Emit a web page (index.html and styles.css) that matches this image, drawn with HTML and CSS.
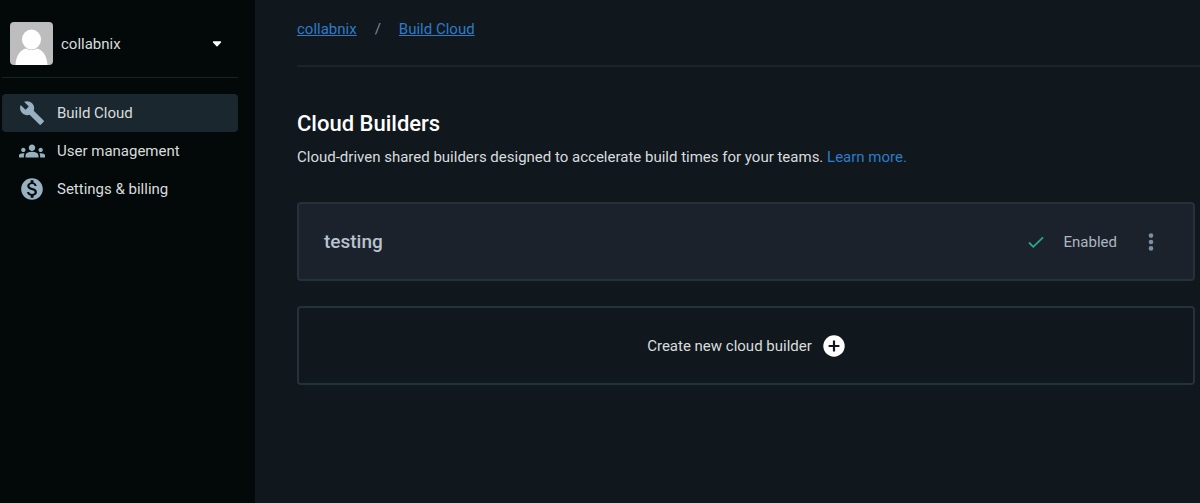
FILE: index.html
```html
<!DOCTYPE html>
<html lang="en">
<head>
<meta charset="utf-8">
<meta name="viewport" content="width=device-width, initial-scale=1">
<title>Cloud Builders</title>
<link rel="stylesheet" href="styles.css">
</head>
<body>
<div class="app">
  <aside class="sidebar">
    <button class="account" type="button" aria-haspopup="true">
      <svg class="avatar" viewBox="0 0 43 43" aria-hidden="true">
        <rect width="43" height="43" fill="#bdbdbd"/>
        <path d="M5.500 43C6 34 10 28 16 26.500C18 27.700 19.500 28 21.500 28S25 27.700 27 26.500C33 28 37 34 37.500 43Z" fill="#fff"/>
        <ellipse cx="21.500" cy="17.500" rx="9.500" ry="10" fill="#fff"/>
      </svg>
      <span class="account-name">collabnix</span>
      <svg class="caret" viewBox="0 0 10 6" aria-hidden="true"><path d="M1.500 1h7L5 4.800z" fill="#fff" stroke="#fff" stroke-width="1.400" stroke-linejoin="round"/></svg>
    </button>
    <nav class="nav" aria-label="Main">
      <a class="nav-item nav-item-active" href="#build" aria-current="page">
        <svg class="nav-icon" viewBox="0 0 24 24" aria-hidden="true"><path d="m22.700 19-9.100-9.100c.9-2.300.4-5-1.500-6.900-2-2-5-2.400-7.400-1.300L9 6 6 9 1.600 4.700C.4 7.100.9 10.100 2.900 12.100c1.900 1.900 4.600 2.400 6.900 1.500l9.100 9.100c.4.4 1 .4 1.400 0l2.300-2.300c.5-.4.5-1.100.1-1.400z"/></svg>
        <span>Build Cloud</span>
      </a>
      <a class="nav-item" href="#users">
        <svg class="nav-icon" viewBox="0 0 24 24" aria-hidden="true"><path d="M12 12.750c1.630 0 3.070.39 4.240.9 1.080.48 1.760 1.560 1.760 2.730V18H6v-1.610c0-1.180.68-2.260 1.760-2.730 1.170-.52 2.610-.91 4.240-.91zM4 13c1.100 0 2-.9 2-2s-.9-2-2-2-2 .9-2 2 .9 2 2 2zm1.130 1.100C4.760 14.040 4.390 14 4 14c-.99 0-1.930.21-2.780.58C.48 14.900 0 15.620 0 16.430V18h4.500v-1.610c0-.83.23-1.610.63-2.290zM20 13c1.100 0 2-.9 2-2s-.9-2-2-2-2 .9-2 2 .9 2 2 2zm4 3.430c0-.81-.48-1.530-1.220-1.850C21.930 14.210 20.990 14 20 14c-.39 0-.76.04-1.130.1.4.68.63 1.460.63 2.290V18H24v-1.570zM12 6c1.660 0 3 1.340 3 3s-1.340 3-3 3-3-1.340-3-3 1.340-3 3-3z"/></svg>
        <span>User management</span>
      </a>
      <a class="nav-item" href="#billing">
        <svg class="nav-icon" viewBox="0 0 24 24" aria-hidden="true"><path d="M12 2C6.480 2 2 6.480 2 12s4.480 10 10 10 10-4.480 10-10S17.520 2 12 2zm1.410 16.090V20h-2.670v-1.930c-1.710-.36-3.160-1.460-3.270-3.400h1.960c.1 1.050.82 1.870 2.650 1.870 1.960 0 2.400-.98 2.400-1.590 0-.83-.44-1.610-2.670-2.140-2.480-.6-4.180-1.620-4.180-3.670 0-1.720 1.390-2.840 3.110-3.210V4h2.670v1.950c1.860.45 2.790 1.860 2.850 3.390H14.300c-.05-1.110-.64-1.870-2.220-1.870-1.500 0-2.400.68-2.400 1.640 0 .84.65 1.390 2.670 1.910s4.180 1.390 4.180 3.910c-.01 1.830-1.380 2.830-3.120 3.160z"/></svg>
        <span>Settings &amp; billing</span>
      </a>
    </nav>
  </aside>
  <main class="main">
    <nav class="breadcrumb" aria-label="Breadcrumb">
      <a href="#org">collabnix</a>
      <span class="slash">/</span>
      <a href="#build">Build Cloud</a>
    </nav>
    <section class="content">
      <h1 class="title">Cloud Builders</h1>
      <p class="intro">Cloud-driven shared builders designed to accelerate build times for your teams. <a href="#learn">Learn more.</a></p>
      <div class="card builder">
        <h2 class="builder-name">testing</h2>
        <svg class="check" viewBox="0 0 16 12" aria-hidden="true"><path d="M1 6.500 5.300 10.800 15 1.300" fill="none" stroke="#2aa889" stroke-width="1.800"/></svg>
        <span class="status">Enabled</span>
        <button class="more" type="button" aria-label="Builder options">
          <svg class="dots" viewBox="0 0 6 18" aria-hidden="true"><circle cx="3" cy="2.600" r="2.300"/><circle cx="3" cy="9" r="2.300"/><circle cx="3" cy="15.400" r="2.300"/></svg>
        </button>
      </div>
      <button class="card create" type="button">
        <span>Create new cloud builder</span>
        <svg class="plus" viewBox="0 0 22 22" aria-hidden="true"><circle cx="11" cy="11" r="10.700" fill="#fff"/><path d="M11 5.600v10.800M5.600 11h10.800" stroke="#10171d" stroke-width="2.200"/></svg>
      </button>
    </section>
  </main>
</div>
</body>
</html>
```
FILE: styles.css
```css
* {
  box-sizing: border-box;
}

body {
  margin: 0;
  background: #10171d;
  color: #d9dcde;
  font: 15px/24px Roboto, "Liberation Sans", sans-serif;
}

button {
  font: inherit;
  color: inherit;
  background: none;
  border: 0;
  padding: 0;
  cursor: pointer;
}

svg {
  display: block;
  flex: none;
}

.app {
  display: flex;
  min-height: 100vh;
}

.sidebar {
  flex: 0 0 255px;
  padding: 10px 17px 0 2px;
  background: #020908;
}

.account {
  display: flex;
  align-items: center;
  gap: 8px;
  width: 100%;
  padding: 12px 16px 12px 8px;
  border-bottom: 1px solid #1a2122;
  text-align: left;
}

.avatar {
  width: 43px;
  height: 43px;
  border-radius: 4px;
}

.account-name {
  flex: 1;
}

.caret {
  width: 10px;
  height: 6px;
}

.nav {
  display: flex;
  flex-direction: column;
  margin-top: 16px;
}

.nav-item {
  display: flex;
  align-items: center;
  gap: 12px;
  height: 38px;
  padding: 0 17px;
  border-radius: 4px;
  color: inherit;
  text-decoration: none;
}

.nav-item-active {
  background: #1a272e;
}

.nav-icon {
  width: 26px;
  height: 26px;
  fill: #98b1c2;
}

.main {
  flex: 1;
  min-width: 0;
  padding-left: 42px;
}

.breadcrumb {
  display: flex;
  gap: 18px;
  padding: 17px 0 24px;
  border-bottom: 2px solid #1a242b;
}

a {
  color: #2c7cc9;
}

.slash {
  color: #858b8f;
}

.content {
  padding: 41px 5px 40px 0;
}

.title {
  margin: 0;
  color: #fff;
  font-size: 22px;
  font-weight: 500;
  line-height: 32px;
}

.intro {
  margin: 5px 0 33px;
}

.intro a {
  text-decoration: none;
}

.card {
  display: flex;
  align-items: center;
  width: 100%;
  min-height: 79px;
  border: 2px solid #23323b;
  border-radius: 4px;
}

.builder {
  margin-bottom: 25px;
  padding: 0 33px 0 25px;
  background: #1b222c;
  color: #adb6c0;
}

.builder-name {
  flex: 1;
  margin: 0;
  color: #b9c3cf;
  font-size: 19px;
  font-weight: 500;
}

.check {
  width: 16px;
  height: 12px;
  margin-right: 20px;
}

.status {
  margin-right: 25px;
}

.more {
  padding: 4px 6px;
}

.dots {
  width: 6px;
  height: 18px;
  fill: #78909f;
}

.create {
  justify-content: center;
  gap: 11px;
}

.plus {
  width: 22px;
  height: 22px;
}
```
